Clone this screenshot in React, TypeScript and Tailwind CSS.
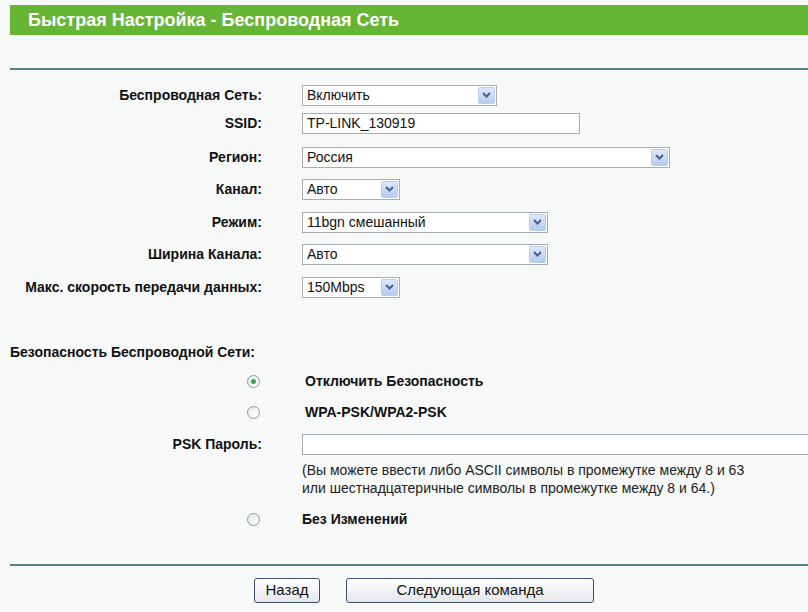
import type { ReactNode } from "react";

const font = { fontFamily: '"Liberation Sans", Arial, sans-serif' };

const Arrow = () => (
  <span className="flex h-[17px] w-[17px] shrink-0 items-center justify-center rounded-[2px] border border-[#b9cdee] bg-gradient-to-b from-[#dde8fb] to-[#b5cbf1]">
    <svg width="9" height="6" viewBox="0 0 9 6">
      <path d="M1 1 L4.5 4.5 L8 1" fill="none" stroke="#4b5f86" strokeWidth="2" />
    </svg>
  </span>
);

const Select = ({ value, width }: { value: string; width: string }) => (
  <div className={`flex h-[21px] shrink-0 items-center justify-between border border-[#a7adb3] bg-white pl-[4px] pr-[1px] text-[14px] text-[#111] ${width}`}>
    <span>{value}</span>
    <Arrow />
  </div>
);

const Input = ({ value, width }: { value?: string; width: string }) => (
  <div className={`flex h-[21px] shrink-0 items-center border border-[#a7adb3] bg-white pl-[4px] text-[14px] text-[#111] ${width}`}>
    {value}
  </div>
);

const Row = ({ label, mt, children }: { label: string; mt: string; children: ReactNode }) => (
  <div className={`flex h-[22px] items-center ${mt}`}>
    <div className="w-[252px] shrink-0 text-right text-[14px] font-bold text-[#111]">{label}</div>
    <div className="ml-[40px] flex shrink-0 items-center">{children}</div>
  </div>
);

const Radio = ({ checked }: { checked?: boolean }) => (
  <span className="flex h-[13px] w-[13px] items-center justify-center rounded-full border border-[#8f9aa3] bg-gradient-to-br from-[#e6e9ec] to-white">
    {checked && <span className="h-[5px] w-[5px] rounded-full bg-[#3fa34a]" />}
  </span>
);

const RadioRow = ({ label, checked, mt, pad }: { label: string; checked?: boolean; mt: string; pad: string }) => (
  <div className={`flex h-[22px] items-center ${mt}`}>
    <div className="flex w-[250px] shrink-0 justify-end">
      <Radio checked={checked} />
    </div>
    <div className={`ml-[42px] text-[14px] font-bold text-[#111] ${pad}`}>{label}</div>
  </div>
);

const Button = ({ label, width }: { label: string; width: string }) => (
  <button className={`h-[25px] rounded-[3px] border border-[#3c4e6b] bg-gradient-to-b from-white to-[#e4e6ea] text-[15px] text-[#111] ${width}`}>
    {label}
  </button>
);

export default function App() {
  return (
    <div className="h-[612px] w-[808px] overflow-hidden bg-[#f7f8f8] pl-[10px] pt-[5px]" style={font}>
      <div className="flex h-[30px] items-center bg-[#66b534] pl-[18px] text-[18px] font-bold text-white">
        Быстрая Настройка - Беспроводная Сеть
      </div>
      <div className="mt-[33px] border-t-2 border-[#557f80]" />

      <Row label="Беспроводная Сеть:" mt="mt-[14px]">
        <Select value="Включить" width="w-[195px]" />
      </Row>
      <Row label="SSID:" mt="mt-[6px]">
        <Input value="TP-LINK_130919" width="w-[278px]" />
      </Row>
      <Row label="Регион:" mt="mt-[12px]">
        <Select value="Россия" width="w-[368px]" />
      </Row>
      <Row label="Канал:" mt="mt-[10px]">
        <Select value="Авто" width="w-[98px]" />
      </Row>
      <Row label="Режим:" mt="mt-[11px]">
        <Select value="11bgn смешанный" width="w-[246px]" />
      </Row>
      <Row label="Ширина Канала:" mt="mt-[10px]">
        <Select value="Авто" width="w-[246px]" />
      </Row>
      <Row label="Макс. скорость передачи данных:" mt="mt-[11px]">
        <Select value="150Mbps" width="w-[98px]" />
      </Row>

      <div className="mt-[43px] flex h-[22px] items-center text-[14px] font-bold text-[#111]">
        Безопасность Беспроводной Сети:
      </div>
      <RadioRow label="Отключить Безопасность" checked mt="mt-[7px]" pad="pl-[3px]" />
      <RadioRow label="WPA-PSK/WPA2-PSK" mt="mt-[9px]" pad="pl-[3px]" />
      <Row label="PSK Пароль:" mt="mt-[10px]">
        <Input width="w-[520px]" />
      </Row>
      <div className="ml-[292px] mt-[6px] text-[14px] leading-[18px] text-[#222]">
        (Вы можете ввести либо ASCII символы в промежутке между 8 и 63
        <br />
        или шестнадцатеричные символы в промежутке между 8 и 64.)
      </div>
      <RadioRow label="Без Изменений" mt="mt-[11px]" pad="" />

      <div className="mt-[34px] border-t-2 border-[#557f80]" />
      <div className="mt-[12px] flex gap-[26px] pl-[244px]">
        <Button label="Назад" width="w-[66px]" />
        <Button label="Следующая команда" width="w-[248px]" />
      </div>
    </div>
  );
}
